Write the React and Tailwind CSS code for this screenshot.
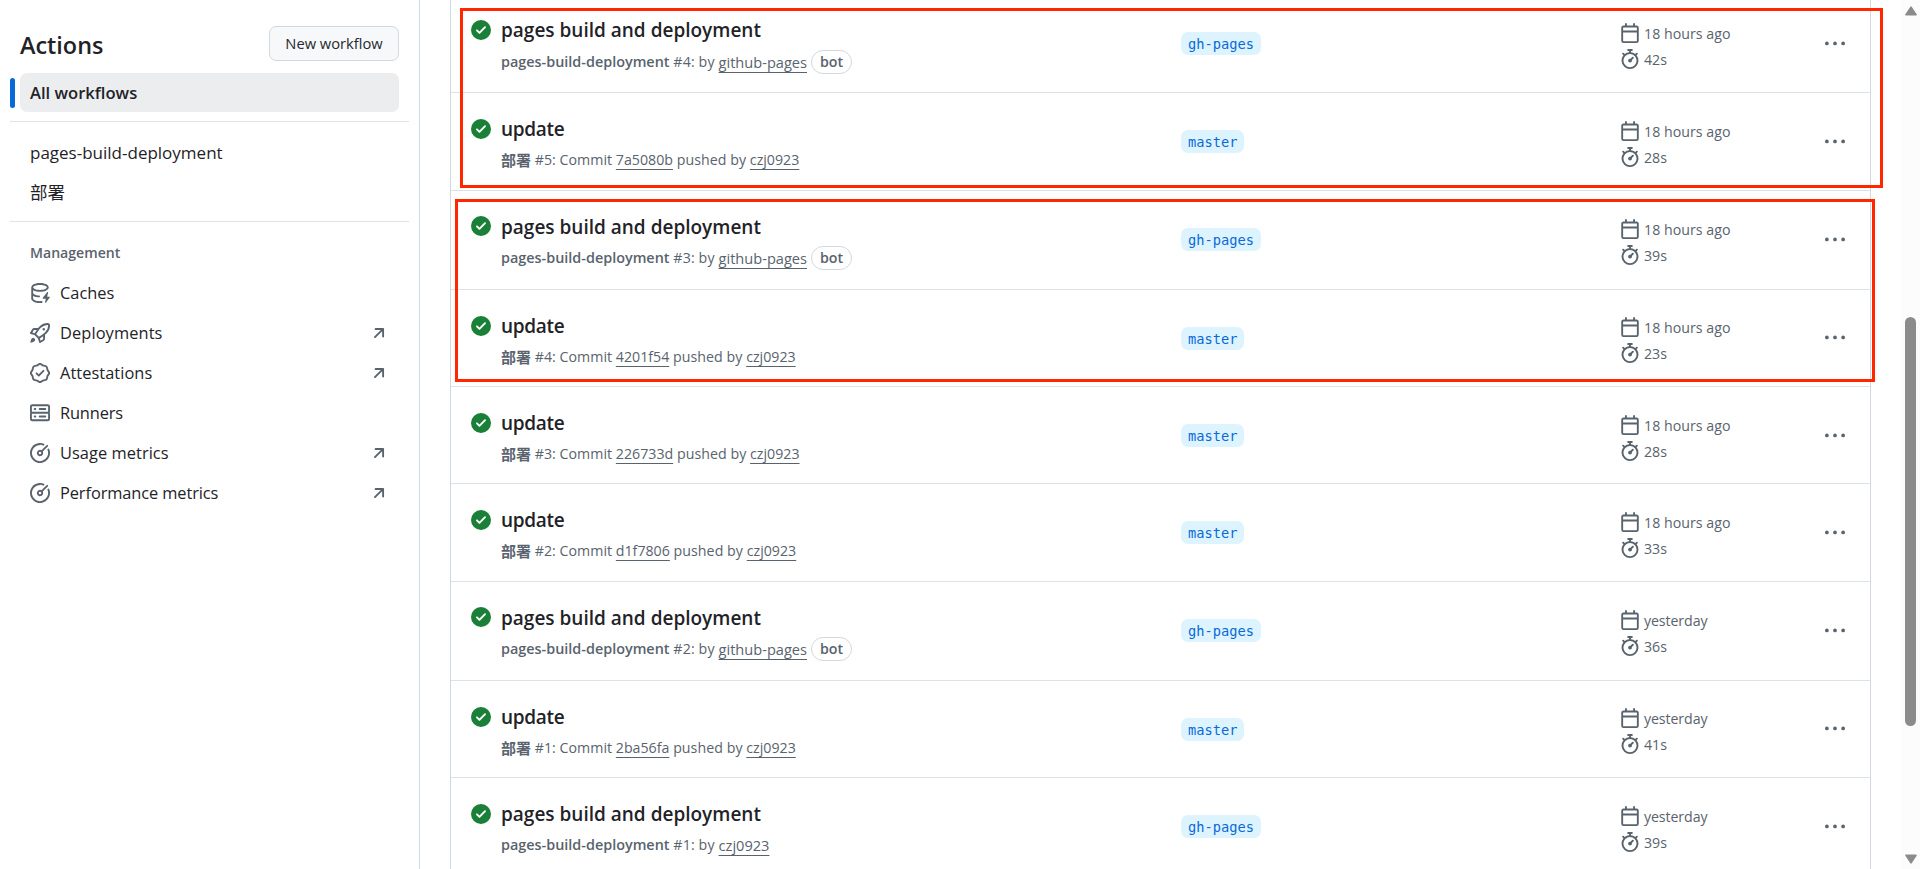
const PATHS = {
  check:
    "M8 16A8 8 0 1 1 8 0a8 8 0 0 1 0 16Zm3.78-9.72a.751.751 0 0 0-.018-1.042.751.751 0 0 0-1.042-.018L6.75 9.19 5.28 7.72a.751.751 0 0 0-1.042.018.751.751 0 0 0-.018 1.042l2 2a.75.75 0 0 0 1.06 0Z",
  calendar:
    "M4.75 0a.75.75 0 0 1 .75.75V2h5V.75a.75.75 0 0 1 1.5 0V2h1.25c.966 0 1.75.784 1.75 1.75v10.5A1.75 1.75 0 0 1 13.25 16H2.75A1.75 1.75 0 0 1 1 14.25V3.75C1 2.784 1.784 2 2.75 2H4V.75A.75.75 0 0 1 4.75 0ZM2.5 7.5v6.75c0 .138.112.25.25.25h10.5a.25.25 0 0 0 .25-.25V7.5Zm10.75-4H2.75a.25.25 0 0 0-.25.25V6h11V3.75a.25.25 0 0 0-.25-.25Z",
  stopwatch:
    "M5.75.75A.75.75 0 0 1 6.5 0h3a.75.75 0 0 1 0 1.5h-.75v1l-.001.041a6.724 6.724 0 0 1 3.464 1.435l.007-.006.75-.75a.749.749 0 0 1 1.275.326.749.749 0 0 1-.215.734l-.75.75-.006.007a6.75 6.75 0 1 1-10.548 0L2.72 5.03l-.75-.75a.751.751 0 0 1 .018-1.042.751.751 0 0 1 1.042-.018l.75.75.007.006A6.72 6.72 0 0 1 7.25 2.541V1.5H6.5a.75.75 0 0 1-.75-.75ZM8 14.5a5.25 5.25 0 1 0-.001-10.501A5.25 5.25 0 0 0 8 14.5Zm.389-6.7 1.33-1.33a.75.75 0 1 1 1.061 1.06L9.45 8.861A1.503 1.503 0 0 1 8 10.75a1.499 1.499 0 1 1 .389-2.95Z",
  kebab:
    "M8 9a1.5 1.5 0 1 0 0-3 1.5 1.5 0 0 0 0 3ZM1.5 9a1.5 1.5 0 1 0 0-3 1.5 1.5 0 0 0 0 3Zm13 0a1.5 1.5 0 1 0 0-3 1.5 1.5 0 0 0 0 3Z",
  cache:
    "M2.5 5.724V8c0 .248.238.7 1.169 1.159.874.43 2.144.745 3.62.822a.75.75 0 1 1-.078 1.498c-1.622-.085-3.102-.432-4.204-.975a5.565 5.565 0 0 1-.507-.28V12.5c0 .133.058.318.282.551.227.237.591.483 1.101.707 1.015.447 2.47.742 4.117.742.406 0 .802-.018 1.183-.052a.751.751 0 1 1 .134 1.494C8.89 15.98 8.45 16 8 16c-1.805 0-3.475-.32-4.721-.869-.623-.274-1.173-.619-1.579-1.041-.408-.425-.7-.964-.7-1.59v-9c0-.626.292-1.165.7-1.591.406-.42.956-.766 1.579-1.04C4.525.32 6.195 0 8 0c1.806 0 3.476.32 4.721.869.623.274 1.173.619 1.579 1.041.408.425.7.964.7 1.59 0 .626-.292 1.165-.7 1.591-.406.42-.956.766-1.578 1.04C11.475 6.68 9.805 7 8 7c-1.805 0-3.475-.32-4.721-.869a6.15 6.15 0 0 1-.779-.407Zm0-2.224c0 .133.058.318.282.551.227.237.591.483 1.101.707C4.898 5.205 6.353 5.5 8 5.5c1.646 0 3.101-.295 4.118-.742.508-.224.873-.471 1.1-.708.224-.232.282-.417.282-.55 0-.133-.058-.318-.282-.551-.227-.237-.591-.483-1.101-.707C11.102 1.795 9.647 1.5 8 1.5c-1.646 0-3.101.295-4.118.742-.508.224-.873.471-1.1.708-.224.232-.282.417-.282.55ZM14.49 7.582a.375.375 0 0 0-.66-.313l-3.625 4.625a.375.375 0 0 0 .295.606h2.127l-.619 2.922a.375.375 0 0 0 .666.304l3.125-4.125A.375.375 0 0 0 15.5 11h-1.778l.769-3.418Z",
  rocket:
    "M14.064 0h.186C15.216 0 16 .784 16 1.75v.186a8.752 8.752 0 0 1-2.564 6.186l-.458.459c-.314.314-.641.616-.979.904v3.207c0 .608-.315 1.172-.833 1.49l-2.774 1.707a.749.749 0 0 1-1.11-.418l-.954-3.102a1.214 1.214 0 0 1-.145-.125L3.754 9.816a1.218 1.218 0 0 1-.124-.145L.528 8.717a.749.749 0 0 1-.418-1.11l1.71-2.774A1.748 1.748 0 0 1 3.31 4h3.204c.288-.338.59-.665.904-.979l.459-.458A8.749 8.749 0 0 1 14.064 0ZM8.938 3.623h-.002l-.458.458c-.76.76-1.437 1.598-2.02 2.5l-1.5 2.317 2.143 2.143 2.317-1.5c.902-.583 1.74-1.26 2.499-2.02l.459-.458a7.25 7.25 0 0 0 2.123-5.127V1.75a.25.25 0 0 0-.25-.25h-.186a7.249 7.249 0 0 0-5.125 2.123ZM3.56 14.56c-.732.732-2.334 1.045-3.005 1.148a.234.234 0 0 1-.201-.064.234.234 0 0 1-.064-.201c.103-.671.416-2.273 1.15-3.003a1.502 1.502 0 1 1 2.12 2.12Zm6.94-3.935c-.088.06-.177.118-.266.175l-2.35 1.521.548 1.783 1.949-1.2a.25.25 0 0 0 .119-.213ZM3.678 8.116 5.2 5.766c.058-.09.117-.178.176-.266H3.309a.25.25 0 0 0-.213.119l-1.2 1.95ZM12 5a1 1 0 1 1-2 0 1 1 0 0 1 2 0Z",
  verified:
    "m9.585.52.929.68c.153.112.331.186.518.215l1.138.175a2.678 2.678 0 0 1 2.24 2.24l.174 1.139c.029.187.103.365.215.518l.68.928a2.677 2.677 0 0 1 0 3.17l-.68.928a1.174 1.174 0 0 0-.215.518l-.175 1.138a2.678 2.678 0 0 1-2.241 2.241l-1.138.175a1.17 1.17 0 0 0-.518.215l-.928.68a2.677 2.677 0 0 1-3.17 0l-.928-.68a1.174 1.174 0 0 0-.518-.215L3.83 14.41a2.678 2.678 0 0 1-2.24-2.24l-.175-1.138a1.17 1.17 0 0 0-.215-.518l-.68-.928a2.677 2.677 0 0 1 0-3.17l.68-.928c.112-.153.186-.331.215-.518l.175-1.14a2.678 2.678 0 0 1 2.24-2.24l1.139-.175c.187-.029.365-.103.518-.215l.928-.68a2.677 2.677 0 0 1 3.17 0ZM7.303 1.728l-.927.68a2.67 2.67 0 0 1-1.18.489l-1.137.174a1.179 1.179 0 0 0-.987.987l-.174 1.136a2.677 2.677 0 0 1-.489 1.18l-.68.928a1.18 1.18 0 0 0 0 1.394l.68.927c.256.348.424.753.489 1.18l.174 1.137c.078.509.478.909.987.987l1.136.174a2.67 2.67 0 0 1 1.18.489l.928.68c.414.305.979.305 1.394 0l.927-.68a2.67 2.67 0 0 1 1.18-.489l1.137-.174a1.18 1.18 0 0 0 .987-.987l.174-1.136a2.67 2.67 0 0 1 .489-1.18l.68-.928a1.176 1.176 0 0 0 0-1.394l-.68-.927a2.686 2.686 0 0 1-.489-1.18l-.174-1.137a1.179 1.179 0 0 0-.987-.987l-1.136-.174a2.677 2.677 0 0 1-1.18-.489l-.928-.68a1.176 1.176 0 0 0-1.394 0ZM11.28 6.78l-3.75 3.75a.75.75 0 0 1-1.06 0L4.72 8.78a.751.751 0 0 1 .018-1.042.751.751 0 0 1 1.042-.018L7 8.94l3.22-3.22a.751.751 0 0 1 1.042.018.751.751 0 0 1 .018 1.042Z",
  server:
    "M1.75 1h12.5c.966 0 1.75.784 1.75 1.75v4c0 .372-.116.717-.314 1 .198.283.314.628.314 1v4a1.75 1.75 0 0 1-1.75 1.75H1.75A1.75 1.75 0 0 1 0 12.75v-4c0-.358.109-.707.314-1a1.739 1.739 0 0 1-.314-1v-4C0 1.784.784 1 1.75 1ZM1.5 2.75v4c0 .138.112.25.25.25h12.5a.25.25 0 0 0 .25-.25v-4a.25.25 0 0 0-.25-.25H1.75a.25.25 0 0 0-.25.25Zm.25 5.75a.25.25 0 0 0-.25.25v4c0 .138.112.25.25.25h12.5a.25.25 0 0 0 .25-.25v-4a.25.25 0 0 0-.25-.25ZM7 4.75A.75.75 0 0 1 7.75 4h4.5a.75.75 0 0 1 0 1.5h-4.5A.75.75 0 0 1 7 4.75ZM7.75 10h4.5a.75.75 0 0 1 0 1.5h-4.5a.75.75 0 0 1 0-1.5ZM3 4.75A.75.75 0 0 1 3.75 4h.5a.75.75 0 0 1 0 1.5h-.5A.75.75 0 0 1 3 4.75ZM3.75 10h.5a.75.75 0 0 1 0 1.5h-.5a.75.75 0 0 1 0-1.5Z",
  meter:
    "M8 1.5a6.5 6.5 0 1 0 6.016 4.035.75.75 0 0 1 1.388-.57 8 8 0 1 1-4.37-4.37.75.75 0 0 1-.569 1.389A6.473 6.473 0 0 0 8 1.5Zm6.28.22a.75.75 0 0 1 0 1.06l-4.063 4.064a2.5 2.5 0 1 1-1.06-1.06L13.22 1.72a.75.75 0 0 1 1.06 0ZM7 8a1 1 0 1 0 2 0 1 1 0 0 0-2 0Z",
  arrow:
    "M4.53 4.75A.75.75 0 0 1 5.28 4h6.01a.75.75 0 0 1 .75.75v6.01a.75.75 0 0 1-1.5 0v-4.2l-5.26 5.261a.749.749 0 0 1-1.275-.326.749.749 0 0 1 .215-.734L9.48 5.5h-4.2a.75.75 0 0 1-.75-.75Z",
};

function Icon({ name, className = "" }) {
  return (
    <svg viewBox="0 0 16 16" fill="currentColor" className={`size-5 shrink-0 ${className}`} aria-hidden="true">
      <path d={PATHS[name]} />
    </svg>
  );
}

const LINKS = [
  { icon: "cache", label: "Caches" },
  { icon: "rocket", label: "Deployments", external: true, fit: "tracking-[0.1px]" },
  { icon: "verified", label: "Attestations", external: true, fit: "tracking-[0.05px]" },
  { icon: "server", label: "Runners", fit: "tracking-[-0.15px]" },
  { icon: "meter", label: "Usage metrics", external: true, fit: "tracking-[0.05px]" },
  { icon: "meter", label: "Performance metrics", external: true, fit: "tracking-[-0.1px]" },
];

const RUNS = [
  { n: 4, by: "github-pages", bot: true, when: "18 hours ago", took: "42s", h: "h-[98px]", title: "pt-5 pb-[5px]" },
  { n: 5, hash: "7a5080b", when: "18 hours ago", took: "28s", h: "h-[98px]" },
  { n: 3, by: "github-pages", bot: true, when: "18 hours ago", took: "39s", h: "h-[99px]" },
  { n: 4, hash: "4201f54", when: "18 hours ago", took: "23s", h: "h-[97px]", raised: true },
  { n: 3, hash: "226733d", when: "18 hours ago", took: "28s", h: "h-[97px]" },
  { n: 2, hash: "d1f7806", when: "18 hours ago", took: "33s", h: "h-[98px]" },
  { n: 2, by: "github-pages", bot: true, when: "yesterday", took: "36s", h: "h-[99px]" },
  { n: 1, hash: "2ba56fa", when: "yesterday", took: "41s", h: "h-[97px]", raised: true },
  { n: 1, by: "czj0923", when: "yesterday", took: "39s", h: "h-[98px]" },
];

function UserLink({ children }) {
  return <span className="underline decoration-1 underline-offset-4 [text-decoration-skip-ink:none]">{children}</span>;
}

function Sidebar() {
  return (
    <aside className="flex w-[420px] shrink-0 flex-col border-r border-[#d1d9e0] text-[16.4px] text-[#1f2328]">
      <div className="flex h-[73px] items-start justify-between pt-[26px] pr-5 pl-5">
        <h1 className="pt-px text-[23.4px] leading-[36px] font-semibold">Actions</h1>
        <button className="h-[35px] w-[130px] rounded-[7px] border border-[#d1d9e0] bg-[#f6f8fa] text-[14.7px] leading-[33px] font-medium text-[#25292e]">
          New workflow
        </button>
      </div>
      <div className="flex items-center gap-[5px] pr-5 pl-[10px]">
        <span className="h-[30px] w-[5px] rounded-full bg-[#0969da]" />
        <div className="h-[39px] flex-1 rounded-[7px] bg-[#ecedef] pl-[10px] text-[16.6px] leading-[39px] font-semibold">
          All workflows
        </div>
      </div>
      <div className="mr-[10px] ml-[10px] mt-[9px] border-t border-[#dfe3e7]" />
      <div className="mt-[11px] flex flex-col pl-[30px]">
        <div className="h-10 text-[17px] leading-[39px]">pages-build-deployment</div>
        <div className="h-10 text-[17.5px] leading-[38px]">部署</div>
      </div>
      <div className="mr-[10px] ml-[10px] mt-[8px] border-t border-[#dfe3e7]" />
      <div className="mt-[20px] pl-[30px] text-[14.1px] leading-[22px] font-semibold text-[#59636e]">Management</div>
      <nav className="mt-[9px] flex flex-col">
        {LINKS.map((l) => (
          <div key={l.label} className="flex h-10 items-center pr-[30px] pl-[30px]">
            <Icon name={l.icon} className="-mt-px text-[#59636e]" />
            <span className={`ml-[10px] flex-1 leading-[24px] ${l.fit || ""}`}>{l.label}</span>
            {l.external && <Icon name="arrow" className="-mt-px text-[#59636e]" />}
          </div>
        ))}
      </nav>
    </aside>
  );
}

function RunRow({ run }) {
  const pages = !run.hash;
  return (
    <div className={`flex shrink-0 items-start border-t border-[#dde2e7] text-[14.2px] text-[#59636e] ${run.h}`}>
      <Icon name="check" className={`ml-5 text-[#1a7f37] ${run.bot ? "mt-[25px]" : "mt-[26px]"}`} />
      <div className="ml-[10px] w-[680px]">
        <div className={run.title || "pt-[21px] pb-1"}>
          <div
            className={`h-[30px] text-[19px] leading-[30px] font-semibold text-[#1f2328] ${pages ? "" : "tracking-[-0.3px]"}`}
          >
            {pages ? "pages build and deployment" : "update"}
          </div>
        </div>
        <div className="flex h-6 items-center whitespace-pre leading-[24px]">
          {pages ? (
            <>
              <b className="text-[14.4px] font-semibold">pages-build-deployment</b>
              <span className="tracking-[0.15px]">{` #${run.n}: by `}</span>
              <span className="text-[14.6px]">
                <UserLink>{run.by}</UserLink>
              </span>
              {run.bot && (
                <span className="ml-1 h-6 w-[41px] rounded-full border border-[#d1d9e0] text-center leading-[22px] font-semibold">
                  bot
                </span>
              )}
            </>
          ) : (
            <>
              <b className="text-[15px] font-bold">部署</b>
              <span className="tracking-[0.03px]">{` #${run.n}: Commit `}</span>
              <UserLink>{run.hash}</UserLink>
              <span className="tracking-[0.05px]">{" pushed by "}</span>
              <UserLink>czj0923</UserLink>
            </>
          )}
        </div>
      </div>
      <div className="w-[439px] pt-[37px]">
        <span className="block h-[23px] w-fit rounded-[7px] bg-[#ddf4ff] px-[7px] font-['DejaVu_Sans_Mono',monospace] text-[13.7px] leading-[24px] text-[#0969da]">
          {pages ? "gh-pages" : "master"}
        </span>
      </div>
      <div className={`flex flex-1 flex-col ${run.raised ? "pt-[27px]" : "pt-7"}`}>
        <div className="flex h-[26px] items-start gap-[4px] leading-[22px]">
          <Icon name="calendar" />
          <span className={run.when === "yesterday" ? "tracking-[-0.1px]" : "tracking-[0.03px]"}>{run.when}</span>
        </div>
        <div className="flex h-[26px] items-start gap-[4px] leading-[22px]">
          <Icon name="stopwatch" />
          {run.took}
        </div>
      </div>
      <Icon name="kebab" className={`mr-[25px] ${run.raised ? "mt-[38px]" : "mt-[39px]"}`} />
    </div>
  );
}

function Scrollbar() {
  return (
    <div className="flex w-[19px] shrink-0 flex-col items-center bg-[#fcfcfc]">
      <svg viewBox="0 0 12 10" className="mt-[6px] h-[10px] w-3 shrink-0" aria-hidden="true">
        <path d="M6 1.2 11 8.8H1Z" fill="#8b8b8b" stroke="#8b8b8b" strokeWidth="1.6" strokeLinejoin="round" />
      </svg>
      <div className="mt-[301px] h-[409px] w-[11px] shrink-0 rounded-full bg-[#8b8b8b]" />
      <svg viewBox="0 0 12 10" className="mt-auto mb-[5px] h-[10px] w-3 shrink-0" aria-hidden="true">
        <path d="M6 8.8 1 1.2H11Z" fill="#8b8b8b" stroke="#8b8b8b" strokeWidth="1.6" strokeLinejoin="round" />
      </svg>
    </div>
  );
}

export default function App() {
  return (
    <div className="relative flex h-[869px] w-[1920px] overflow-hidden bg-white font-['Open_Sans','Noto_Sans_CJK_SC',sans-serif]">
      <Sidebar />
      <main className="flex min-w-0 flex-1 items-start overflow-hidden pr-[30px] pl-[30px]">
        <div className="-mt-[6px] flex flex-1 flex-col border-x border-[#d1d9e0]">
          {RUNS.map((run, i) => (
            <RunRow key={i} run={run} />
          ))}
        </div>
      </main>
      <Scrollbar />
      <div className="pointer-events-none absolute top-[8px] left-[460px] h-[180px] w-[1423px] border-3 border-[#ff2600]" />
      <div className="pointer-events-none absolute top-[199px] left-[455px] h-[183px] w-[1420px] border-3 border-[#ff2600]" />
    </div>
  );
}
